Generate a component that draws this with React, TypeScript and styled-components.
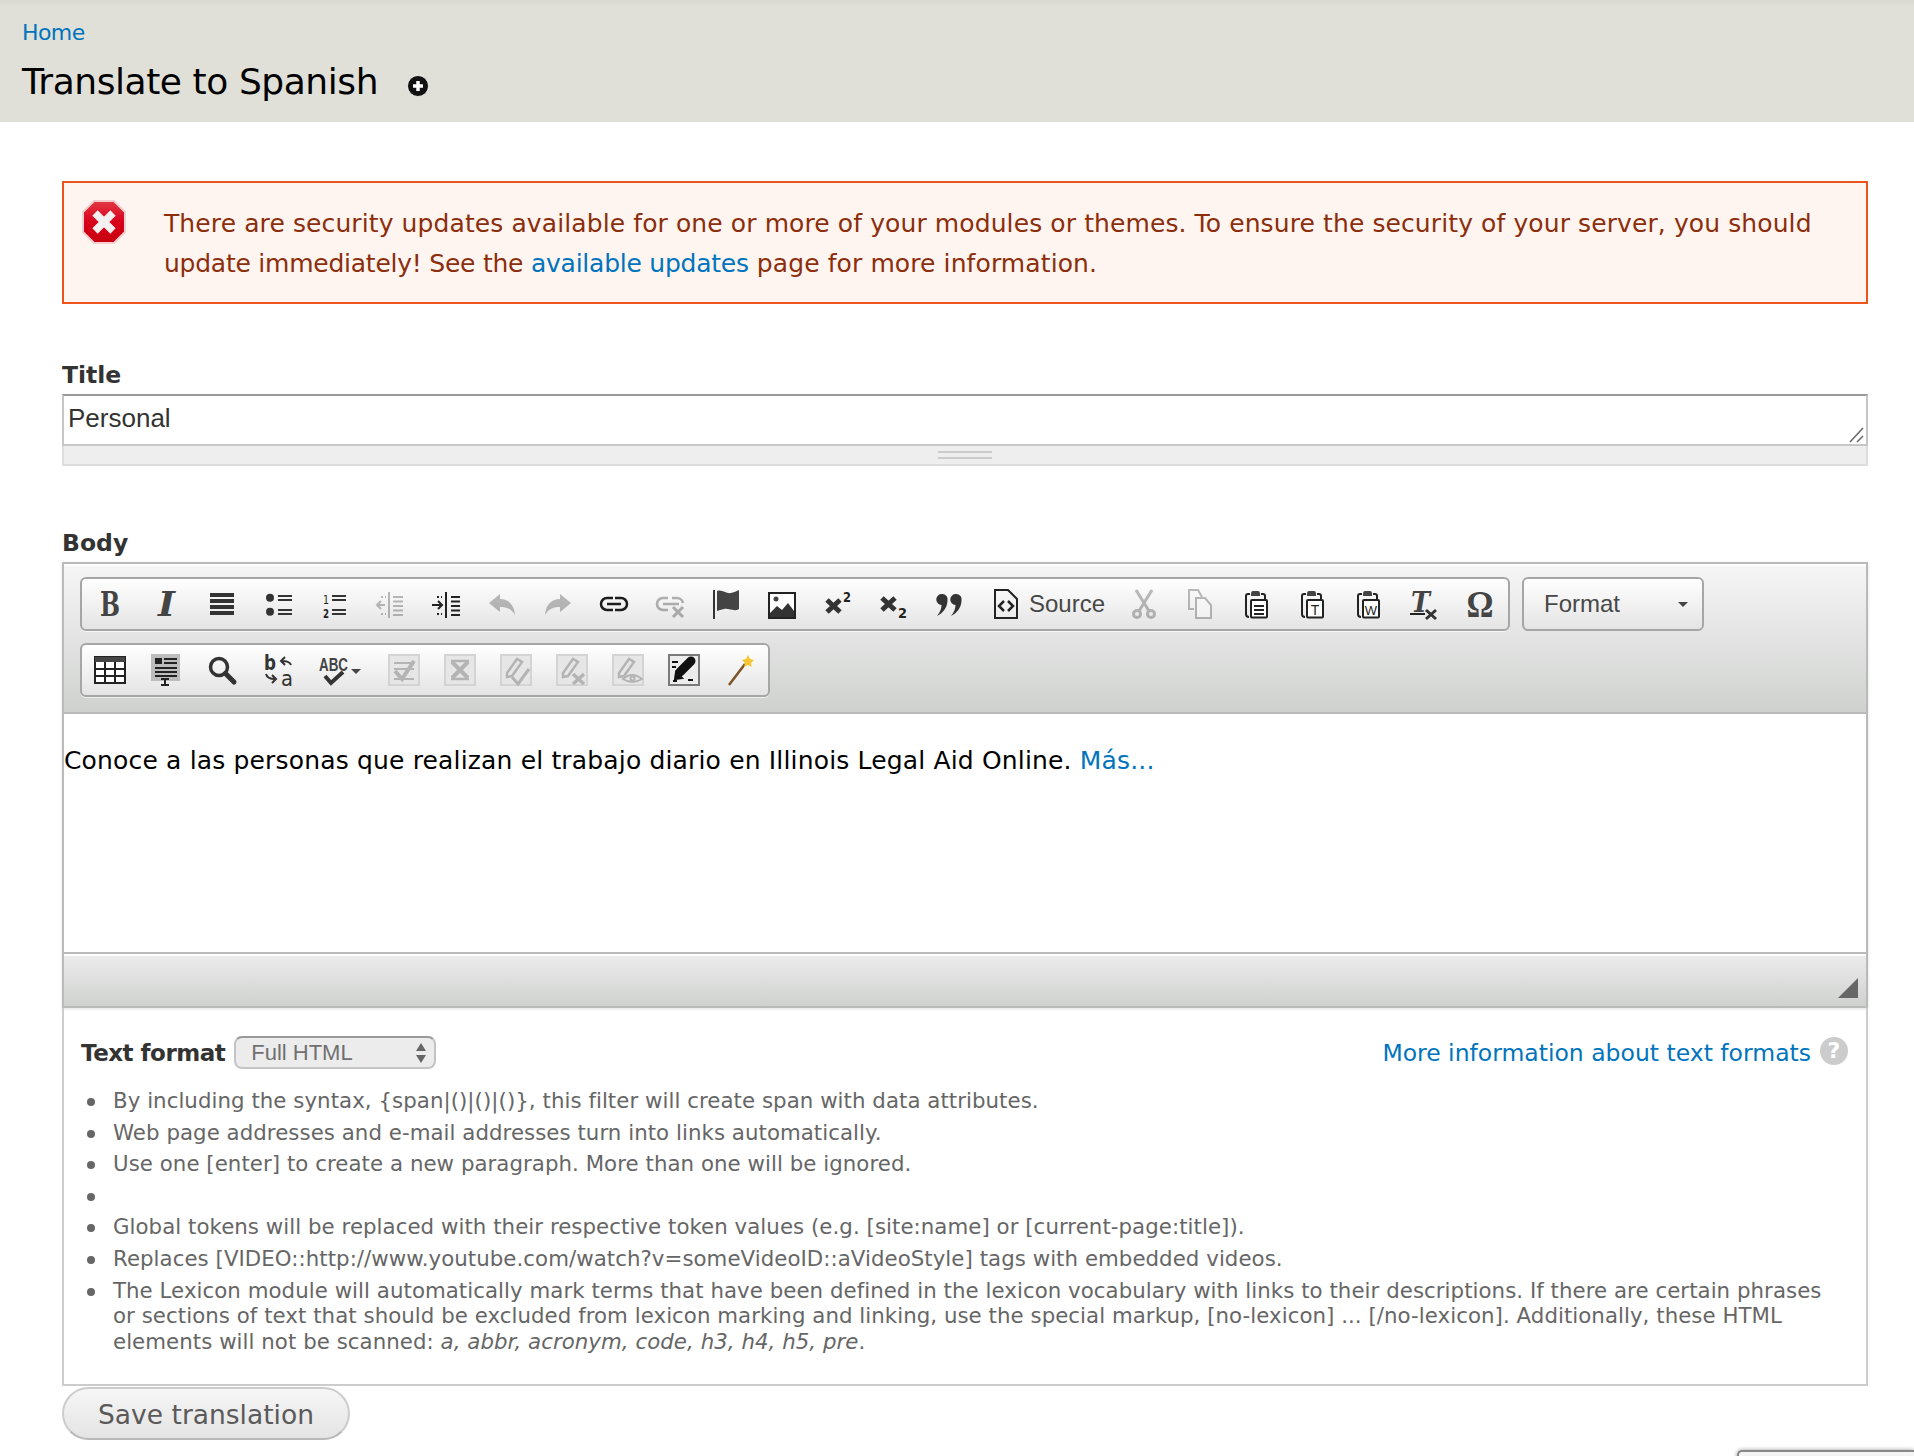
import React from "react";
import styled, { createGlobalStyle } from "styled-components";

const GlobalStyle = createGlobalStyle`
  html, body {
    margin: 0;
    padding: 0;
    background: #fff;
  }
  body {
    width: 1914px;
    height: 1456px;
    overflow: hidden;
    font-family: "DejaVu Sans", sans-serif;
    position: relative;
  }
`;

const Header = styled.header`
  background: linear-gradient(#d8d8d0 0, #e0e0d8 6px);
  height: 122px;
  box-sizing: border-box;
  padding: 17px 22px 0;
`;

const Link = styled.a`
  color: #0074bd;
  text-decoration: none;
`;

const Crumb = styled.div`
  font-size: 22px;
  line-height: 32px;
  letter-spacing: -0.6px;
`;

const TitleRow = styled.div`
  display: flex;
  align-items: center;
  margin-top: 8px;
  height: 50px;
`;

const PageTitle = styled.h1`
  margin: 0;
  font-size: 36px;
  font-weight: 400;
  line-height: 50px;
  color: #000;
  letter-spacing: -0.43px;
`;

const Shortcut = styled.svg`
  width: 22px;
  height: 22px;
  margin: 7px 0 0 29px;
`;

const Main = styled.main`
  padding: 59px 46px 0 62px;
`;

const Alert = styled.div`
  box-sizing: border-box;
  height: 123px;
  border: 2px solid #ed541d;
  background: #fef5f1;
  color: #8c2e0b;
  font-size: 25px;
  line-height: 40px;
  padding: 21px 40px 0 100px;
  position: relative;
  letter-spacing: 0.1px;
`;

const AlertLead = styled.span`
  letter-spacing: -0.24px;
`;

const AlertIcon = styled.svg`
  position: absolute;
  left: 17px;
  top: 16px;
  width: 46px;
  height: 46px;
`;

const FieldLabel = styled.label`
  display: block;
  font-size: 23.5px;
  font-weight: 700;
  line-height: 30px;
  color: #333;
  margin-bottom: 4px;
`;

const TitleField = styled.div`
  margin-top: 56px;
`;

const BodyField = styled.div`
  margin-top: 62px;
`;

const TitleBox = styled.div`
  box-sizing: border-box;
  height: 52px;
  border: 2px solid #c6c6c6;
  border-top-color: #999;
  font-family: "Liberation Sans", Arial, sans-serif;
  font-size: 26px;
  line-height: 44px;
  color: #333;
  padding: 0 2px 4px 4px;
  display: flex;
  justify-content: space-between;
  align-items: flex-end;
`;

const ResizeGrip = styled.svg`
  width: 15px;
  height: 16px;
  margin-bottom: -3px;
`;

const Grippie = styled.div`
  box-sizing: border-box;
  height: 20px;
  background: #eee;
  border: 2px solid #ddd;
  border-top: 0;
  display: flex;
  justify-content: center;
  padding-top: 5px;
`;

const GripLines = styled.div`
  width: 54px;
  height: 8px;
  border-top: 2px solid #ccc;
  border-bottom: 2px solid #ccc;
  box-sizing: border-box;
`;

const Editor = styled.div`
  border: 2px solid #bababa;
  box-shadow: 0 1px 3px rgba(0, 0, 0, 0.12);
`;

const Toolbars = styled.div`
  box-sizing: border-box;
  height: 150px;
  background: linear-gradient(#f6f6f6, #cfd1cf);
  border-bottom: 2px solid #bababa;
  padding: 13px 16px 0 16px;
  display: flex;
  flex-direction: column;
  gap: 12px;
  box-shadow: inset 0 2px 0 #fff;
`;

const ToolRow = styled.div`
  display: flex;
  gap: 12px;
`;

const ToolGroup = styled.div`
  display: flex;
  box-sizing: border-box;
  height: 54px;
  border: 2px solid #a6a6a6;
  border-radius: 6px;
  background: linear-gradient(#fff, #e4e4e4);
  box-shadow: 0 1px 0 rgba(255, 255, 255, 0.6);
  padding: 0;
`;

const ToolButton = styled.div<{ $width?: number; $off?: boolean }>`
  width: ${(p) => p.$width ?? 56}px;
  flex: none;
  height: 50px;
  display: flex;
  align-items: center;
  justify-content: center;
  gap: 8px;
  & > svg {
    overflow: visible;
    opacity: ${(p) => (p.$off ? 0.32 : 1)};
  }
`;

const SourceLabel = styled.span`
  font-family: "Liberation Sans", Arial, sans-serif;
  font-size: 24px;
  color: #474747;
`;

const FormatCombo = styled.div`
  box-sizing: border-box;
  width: 182px;
  height: 54px;
  border: 2px solid #a6a6a6;
  border-radius: 6px;
  background: linear-gradient(#fff, #e4e4e4);
  font-family: "Liberation Sans", Arial, sans-serif;
  font-size: 24px;
  color: #484848;
  padding: 0 14px 0 20px;
  display: flex;
  align-items: center;
  justify-content: space-between;
`;

const ComboArrow = styled.span`
  width: 0;
  height: 0;
  border-left: 5px solid transparent;
  border-right: 5px solid transparent;
  border-top: 5px solid #444;
`;

const Content = styled.div`
  height: 238px;
  box-sizing: border-box;
  background: #fff;
  padding: 27px 0 0;
  font-size: 25px;
  line-height: 40px;
  color: #000;
  letter-spacing: 0.16px;
`;

const BottomBar = styled.div`
  box-sizing: border-box;
  height: 54px;
  border-top: 2px solid #bababa;
  background: linear-gradient(#ececec, #cfd1cf);
  box-shadow: inset 0 2px 0 #fff;
  display: flex;
  justify-content: flex-end;
  align-items: flex-end;
  padding: 0 8px 8px 0;
`;

const ResizeCorner = styled.span`
  width: 0;
  height: 0;
  border-left: 20px solid transparent;
  border-bottom: 20px solid #666;
`;

const FormatPanel = styled.div`
  box-sizing: border-box;
  height: 378px;
  border: 2px solid #ccc;
  border-top: 0;
  padding: 28px 17px 0;
`;

const FormatRow = styled.div`
  display: flex;
  align-items: center;
  height: 33px;
`;

const FormatLabel = styled.span`
  font-size: 23px;
  font-weight: 700;
  color: #333;
  margin-right: 9px;
  letter-spacing: -0.5px;
`;

const FilterSelect = styled.div`
  box-sizing: border-box;
  width: 202px;
  height: 33px;
  border: 2px solid #c4c4c4;
  border-top-color: #999;
  border-radius: 8px;
  background: #ececec;
  font-family: "Liberation Sans", Arial, sans-serif;
  font-size: 22px;
  color: #707070;
  padding-left: 15px;
  display: flex;
  align-items: center;
  justify-content: space-between;
`;

const Stepper = styled.svg`
  width: 12px;
  height: 22px;
  margin-right: 7px;
`;

const HelpLink = styled(Link)`
  margin-left: auto;
  font-size: 23.5px;
`;

const HelpIcon = styled.span`
  width: 28px;
  height: 28px;
  border-radius: 50%;
  background: #ccc;
  color: #fff;
  font-weight: 700;
  font-size: 22px;
  line-height: 28px;
  text-align: center;
  margin: -3px 1px 0 9px;
  flex: none;
`;

const Tips = styled.ul`
  list-style: none;
  margin: 19px 0 0;
  padding: 0 20px 0 32px;
  font-size: 21.3px;
  line-height: 25.6px;
  letter-spacing: 0.05px;
  color: #666;
`;

const Tip = styled.li`
  position: relative;
  margin-bottom: 6px;
  min-height: 25.6px;
  em {
    font-style: italic;
  }
  &::before {
    content: "";
    position: absolute;
    left: -26px;
    top: 10px;
    width: 8px;
    height: 8px;
    border-radius: 50%;
    background: #666;
  }
`;

const SaveButton = styled.button`
  display: block;
  width: 288px;
  height: 53px;
  margin-top: 1px;
  border: 2px solid #ccc;
  border-bottom-color: #b8b8b8;
  border-radius: 27px;
  background: linear-gradient(#f6f6f6, #e4e4e4);
  font-family: "DejaVu Sans", sans-serif;
  font-size: 26.5px;
  color: #5a5a5a;
  padding: 1px 0 0;
`;

const CornerTab = styled.div`
  position: fixed;
  right: 0;
  bottom: -20px;
  width: 175px;
  height: 24px;
  background: #f4f4f4;
  border-top: 2px solid #888;
  border-left: 2px solid #888;
  border-radius: 5px 0 0 0;
  box-shadow: 0 0 4px rgba(0, 0, 0, 0.4);
`;

const Glyph = styled.text<{ $size: number; $family?: string; $weight?: number; $italic?: boolean; $fill?: string }>`
  font-family: ${(p) => p.$family ?? '"DejaVu Serif", serif'};
  font-size: ${(p) => p.$size}px;
  font-weight: ${(p) => p.$weight ?? 700};
  font-style: ${(p) => (p.$italic ? "italic" : "normal")};
  fill: ${(p) => p.$fill ?? "#444"};
`;

const SANS = '"DejaVu Sans", sans-serif';
const ARIAL = '"Liberation Sans", Arial, sans-serif';

const Clipboard = ({ children }: { children: React.ReactNode }) => (
  <>
    <path d="M10 6H8Q6 6 6 8V26Q6 29 9 29" fill="none" stroke="#222" strokeWidth="2" />
    <path d="M11 6Q11 3 13 3H18Q20 3 20 6V8H11Z" fill="#444" />
    <path d="M21 6H23Q25 6 25 8V11" fill="none" stroke="#222" strokeWidth="2" />
    <rect x="11" y="12" width="16" height="17.500" rx="1" fill="#fff" stroke="#222" strokeWidth="2" />
    {children}
  </>
);

const Pencil = ({ ink }: { ink: string }) => (
  <path d="M7 19L17 5L22 8L12 22L7 23Z" fill="none" stroke={ink} strokeWidth="2.500" />
);

const Proof = ({ ink = "#b4b4b4", back = "#e6e6e6", edge = "#d4d4d4", children }: { ink?: string; back?: string; edge?: string; children: React.ReactNode }) => (
  <>
    <rect x="1" y="1" width="30" height="30" fill={back} stroke={edge} strokeWidth="2" />
    <g stroke={ink} fill="none">{children}</g>
  </>
);

const icons: Record<string, React.ReactNode> = {
  bold: <Glyph x="6" y="28" textLength={20} lengthAdjust="spacingAndGlyphs" $size={33}>B</Glyph>,
  italic: <Glyph x="8" y="28" textLength={17} lengthAdjust="spacingAndGlyphs" $size={33} $italic>I</Glyph>,
  justify: (
    <g fill="#333">
      <rect x="4" y="5" width="24" height="4" />
      <rect x="4" y="11" width="24" height="4" />
      <rect x="4" y="17" width="24" height="4" />
      <rect x="4" y="23" width="24" height="4" />
    </g>
  ),
  bullets: (
    <g fill="#333">
      <circle cx="8" cy="9.700" r="4" />
      <circle cx="8" cy="23.700" r="4" />
      <rect x="16" y="7" width="14" height="2" />
      <rect x="16" y="11" width="14" height="2" />
      <rect x="16" y="21" width="14" height="2" />
      <rect x="16" y="25" width="14" height="2" />
    </g>
  ),
  numbers: (
    <>
      <Glyph x="5" y="16" textLength={6} lengthAdjust="spacingAndGlyphs" $size={13} $family={SANS} $weight={400} $fill="#222">1</Glyph>
      <Glyph x="5" y="30" textLength={6} lengthAdjust="spacingAndGlyphs" $size={13} $family={SANS} $fill="#222">2</Glyph>
      <g fill="#333">
        <rect x="14" y="7" width="14" height="2" />
        <rect x="14" y="11" width="14" height="2" />
        <rect x="14" y="21" width="14" height="2" />
        <rect x="14" y="25" width="14" height="2" />
      </g>
    </>
  ),
  outdent: (
    <g stroke="#333" strokeWidth="2" fill="none">
      <path d="M15 4V30" />
      <path d="M19 9H29M19 13.500H29M19 18H29M19 22.500H29M19 27H29" />
      <path d="M11 17H3M7 13L3 17L7 21" />
      <path d="M7 9H12M7 26H12" strokeDasharray="2 2" />
    </g>
  ),
  indent: (
    <g stroke="#222" strokeWidth="2" fill="none">
      <path d="M16 4V30" />
      <path d="M21 9H30M21 13.500H30M21 18H30M21 22.500H30M21 27H30" />
      <path d="M2 17H12M8 13L12 17L8 21" />
      <path d="M7 9H12M7 26H12" strokeDasharray="2 2" />
    </g>
  ),
  undo: <path d="M3 15L14 6V11C22 11 28 16 29 27C25 20 20 19 14 19V24Z" fill="#333" />,
  redo: <path d="M29 15L18 6V11C10 11 4 16 3 27C7 20 12 19 18 19V24Z" fill="#333" />,
  link: (
    <g fill="none" stroke="#1c1c1c" strokeWidth="2.500">
      <path d="M15 10H9A6 6 0 0 0 9 22H15M9 16H23M17 10H23A6 6 0 0 1 23 22H17" />
    </g>
  ),
  unlink: (
    <g fill="none" stroke="#1c1c1c" strokeWidth="2.500">
      <path d="M14 10H9A6 6 0 0 0 9 22H14M9 16H25M18 10H23A6 6 0 0 1 29 15" />
      <path d="M19 19L29 29M29 19L19 29" strokeWidth="3" />
    </g>
  ),
  flag: (
    <>
      <path d="M4 2V31" stroke="#333" strokeWidth="2" />
      <path d="M7 3C12 1 16 6 21 5C25 4 27 3 29 2V21C24 24 19 20 14 21C11 21.500 9 22.500 7 23Z" fill="#444" />
    </>
  ),
  image: (
    <>
      <rect x="3" y="5" width="26" height="25" fill="#fff" stroke="#222" strokeWidth="2" />
      <circle cx="10" cy="11" r="2.500" fill="#444" />
      <path d="M4 29V25L11 18L16 22L22 15L28 23V29Z" fill="#333" />
    </>
  ),
  superscript: (
    <>
      <path d="M5 12L18 24M18 12L5 24" stroke="#333" strokeWidth="5" />
      <Glyph x="21" y="14" textLength={8} lengthAdjust="spacingAndGlyphs" $size={14} $family={SANS} $fill="#222">2</Glyph>
    </>
  ),
  subscript: (
    <>
      <path d="M4 10L17 22M17 10L4 22" stroke="#333" strokeWidth="5" />
      <Glyph x="20" y="30" textLength={9} lengthAdjust="spacingAndGlyphs" $size={14} $family={SANS} $fill="#222">2</Glyph>
    </>
  ),
  quote: (
    <g fill="#333">
      <path d="M8 6A5.500 5.500 0 0 1 13.500 13C13 20 9 25 3 28C6 24 7.500 21 7.500 17A5.500 5.500 0 0 1 8 6Z" />
      <path d="M22 6A5.500 5.500 0 0 1 27.500 13C27 20 23 25 17 28C20 24 21.500 21 21.500 17A5.500 5.500 0 0 1 22 6Z" />
    </g>
  ),
  source: (
    <g fill="none" stroke="#222" strokeWidth="2">
      <path d="M6 2H19L28 11V30H6Z" />
      <path d="M15 13L10 18L15 23M19 13L24 18L19 23" strokeWidth="2.500" />
    </g>
  ),
  cut: (
    <g fill="none" stroke="#333" strokeWidth="3">
      <path d="M11 23L24 2M21 23L8 2" />
      <circle cx="9" cy="26" r="3.500" />
      <circle cx="23" cy="26" r="3.500" />
    </g>
  ),
  copy: (
    <g fill="none" stroke="#333" strokeWidth="2">
      <path d="M10 21H5V2H14L18 9" />
      <path d="M12 10H21L27 17V30H12Z" fill="#fff" />
    </g>
  ),
  paste: (
    <Clipboard>
      <path d="M14 18H24M14 22H24M14 26H24" stroke="#222" strokeWidth="2" />
    </Clipboard>
  ),
  pasteText: (
    <Clipboard>
      <Glyph x="19" y="27" textAnchor="middle" $size={14} $family={ARIAL} $weight={400} $fill="#222">T</Glyph>
    </Clipboard>
  ),
  pasteWord: (
    <Clipboard>
      <Glyph x="19" y="27" textAnchor="middle" $size={13} $family={ARIAL} $weight={400} $fill="#222">W</Glyph>
    </Clipboard>
  ),
  clearFormat: (
    <>
      <Glyph x="3" y="24" textLength={19} lengthAdjust="spacingAndGlyphs" $size={27} $italic>T</Glyph>
      <rect x="2" y="25" width="15" height="2" fill="#222" />
      <path d="M18 22L28 31M28 22L18 31" stroke="#333" strokeWidth="3" />
    </>
  ),
  omega: <Glyph x="2.500" y="29" textLength={27} lengthAdjust="spacingAndGlyphs" $size={38} $family={'"Liberation Serif", serif'}>Ω</Glyph>,
  table: (
    <>
      <rect x="1" y="3" width="30" height="26" fill="#fff" stroke="#222" strokeWidth="2" />
      <rect x="1" y="3" width="30" height="5" fill="#444" />
      <path d="M11 8V29M21 8V29M1 15H31M1 22H31" stroke="#222" strokeWidth="2" />
    </>
  ),
  templates: (
    <>
      <rect x="1" y="0" width="29" height="27" fill="#bdbdbd" />
      <rect x="5" y="4" width="7" height="6" fill="#222" />
      <path d="M14 5H27M14 9H27M5 14H27M5 18H27M5 22H27" stroke="#222" strokeWidth="2" />
      <path d="M11 25H15M11 31H19M15 25V31M15 25H19" stroke="#222" strokeWidth="2" />
    </>
  ),
  find: (
    <g fill="none" stroke="#333">
      <circle cx="13" cy="13" r="8.500" strokeWidth="3.500" />
      <path d="M19.500 19.500L28 28" strokeWidth="5" strokeLinecap="round" />
    </g>
  ),
  replace: (
    <>
      <Glyph x="2" y="16" textLength={12} lengthAdjust="spacingAndGlyphs" $size={22} $family={SANS} $fill="#333">b</Glyph>
      <Glyph x="19" y="32" textLength={12} lengthAdjust="spacingAndGlyphs" $size={22} $family={SANS} $weight={400} $fill="#333">a</Glyph>
      <path d="M29 11C28 8 25 7 20 7M23 3L19 7L23 11M4 20C5 24 8 25 13 25M10 21L14 25L10 29" fill="none" stroke="#333" strokeWidth="2" />
    </>
  ),
  scayt: (
    <>
      <Glyph x="1" y="17" textLength={29} lengthAdjust="spacingAndGlyphs" $size={18} $family={ARIAL} $fill="#444">ABC</Glyph>
      <path d="M7 22L13 29L25 18" fill="none" stroke="#333" strokeWidth="4" />
      <path d="M33 15H43L38 20Z" fill="#444" />
    </>
  ),
  proofCheck: (
    <Proof>
      <path d="M6 9H26M6 15H26M6 25H26" strokeWidth="2" />
      <path d="M7 17L14 25L26 7" strokeWidth="4" />
    </Proof>
  ),
  proofCross: (
    <Proof>
      <path d="M7 7H25M7 25H25" strokeWidth="2.500" />
      <path d="M8 8L24 24M24 8L8 24" strokeWidth="4" />
    </Proof>
  ),
  proofPen: (
    <Proof>
      <Pencil ink="#b4b4b4" />
      <path d="M12 23L18 30L29 15" strokeWidth="3" />
    </Proof>
  ),
  proofPenCross: (
    <Proof>
      <Pencil ink="#b4b4b4" />
      <path d="M17 20L28 30M28 20L17 30" strokeWidth="3.500" />
    </Proof>
  ),
  proofPenEye: (
    <Proof>
      <Pencil ink="#b4b4b4" />
      <path d="M11 25Q20 17 30 25Q20 31 11 25Z" strokeWidth="2" />
      <circle cx="20.500" cy="24.500" r="2" strokeWidth="2" />
    </Proof>
  ),
  proofDialog: (
    <Proof ink="#111" back="#ececec" edge="#7a7a7a">
      <path d="M12 18L23 7" strokeWidth="9" strokeLinecap="round" />
      <path d="M8 18L14 24L7 25Z" fill="#111" strokeWidth="2" />
      <path d="M4 8H10M4 13H8M5 27H9M20 26H25" strokeWidth="2" />
    </Proof>
  ),
  wand: (
    <>
      <path d="M5 31L21 10" stroke="#7d5227" strokeWidth="2.500" />
      <path d="M24 1L26 5L30 6L27 9L27.500 13L24 11L20 13L21 9L18 6L22 5Z" fill="#f6c632" />
    </>
  ),
};

type Tool = { icon: string; off?: boolean; width?: number; label?: string; viewWidth?: number };

const firstRow: Tool[] = [
  { icon: "bold" },
  { icon: "italic" },
  { icon: "justify" },
  { icon: "bullets" },
  { icon: "numbers" },
  { icon: "outdent", off: true },
  { icon: "indent" },
  { icon: "undo", off: true },
  { icon: "redo", off: true },
  { icon: "link" },
  { icon: "unlink", off: true },
  { icon: "flag" },
  { icon: "image" },
  { icon: "superscript" },
  { icon: "subscript" },
  { icon: "quote" },
  { icon: "source", width: 138, label: "Source" },
  { icon: "cut", off: true },
  { icon: "copy", off: true },
  { icon: "paste" },
  { icon: "pasteText" },
  { icon: "pasteWord" },
  { icon: "clearFormat" },
  { icon: "omega" },
];

const secondRow: Tool[] = [
  { icon: "table" },
  { icon: "templates" },
  { icon: "find" },
  { icon: "replace" },
  { icon: "scayt", width: 70, viewWidth: 46 },
  { icon: "proofCheck" },
  { icon: "proofCross" },
  { icon: "proofPen" },
  { icon: "proofPenCross" },
  { icon: "proofPenEye" },
  { icon: "proofDialog" },
  { icon: "wand" },
];

const renderTools = (tools: Tool[]) =>
  tools.map((tool) => (
    <ToolButton key={tool.icon} $width={tool.width} $off={tool.off}>
      <svg
        width={tool.viewWidth ?? 32}
        height="32"
        viewBox={`0 0 ${tool.viewWidth ?? 32} 32`}
      >
        {icons[tool.icon]}
      </svg>
      {tool.label && <SourceLabel>{tool.label}</SourceLabel>}
    </ToolButton>
  ));

const App: React.FC = () => {
  return (
    <>
      <GlobalStyle />
      <Header>
        <Crumb>
          <Link href="#">Home</Link>
        </Crumb>
        <TitleRow>
          <PageTitle>Translate to Spanish</PageTitle>
          <Shortcut viewBox="0 0 22 22">
            <circle cx="11" cy="11" r="10.500" fill="#111" stroke="#fff" strokeWidth="0.800" />
            <path d="M11 6V16M6 11H16" stroke="#fff" strokeWidth="3.500" />
          </Shortcut>
        </TitleRow>
      </Header>
      <Main>
        <Alert>
          <AlertIcon viewBox="0 0 46 46">
            <defs>
              <linearGradient id="stopFill" x1="0" y1="0" x2="0" y2="1">
                <stop offset="0" stopColor="#e23a45" />
                <stop offset="0.500" stopColor="#d8001a" />
                <stop offset="1" stopColor="#c8000f" />
              </linearGradient>
            </defs>
            <path d="M13 2H33L44 13V33L33 44H13L2 33V13Z" fill="url(#stopFill)" stroke="#f3cfcf" strokeWidth="2" />
            <path d="M14 14L32 32M32 14L14 32" stroke="#f4f0f0" strokeWidth="7.500" />
          </AlertIcon>
          There are security updates available for one or more of your modules or themes. To ensure the security of your server, you should <AlertLead>update immediately! See the <Link href="#">available updates</Link></AlertLead> page for more information.
        </Alert>
        <TitleField>
          <FieldLabel>Title</FieldLabel>
          <TitleBox>
            Personal
            <ResizeGrip viewBox="0 0 15 16">
              <path d="M1 15L14 1M8 15L14 9" stroke="#666" strokeWidth="1.500" />
            </ResizeGrip>
          </TitleBox>
          <Grippie>
            <GripLines />
          </Grippie>
        </TitleField>
        <BodyField>
          <FieldLabel>Body</FieldLabel>
          <Editor>
            <Toolbars>
              <ToolRow>
                <ToolGroup>{renderTools(firstRow)}</ToolGroup>
                <FormatCombo>
                  Format
                  <ComboArrow />
                </FormatCombo>
              </ToolRow>
              <ToolRow>
                <ToolGroup>{renderTools(secondRow)}</ToolGroup>
              </ToolRow>
            </Toolbars>
            <Content>
              Conoce a las personas que realizan el trabajo diario en Illinois Legal Aid Online. <Link href="#">Más...</Link>
            </Content>
            <BottomBar>
              <ResizeCorner />
            </BottomBar>
          </Editor>
          <FormatPanel>
            <FormatRow>
              <FormatLabel>Text format</FormatLabel>
              <FilterSelect>
                Full HTML
                <Stepper viewBox="0 0 12 22">
                  <path d="M6 1L11 9H1ZM6 21L1 13H11Z" fill="#666" />
                </Stepper>
              </FilterSelect>
              <HelpLink href="#">More information about text formats</HelpLink>
              <HelpIcon>?</HelpIcon>
            </FormatRow>
            <Tips>
              <Tip>By including the syntax, {"{span|()|()|()}"}, this filter will create span with data attributes.</Tip>
              <Tip>Web page addresses and e-mail addresses turn into links automatically.</Tip>
              <Tip>Use one [enter] to create a new paragraph. More than one will be ignored.</Tip>
              <Tip />
              <Tip>Global tokens will be replaced with their respective token values (e.g. [site:name] or [current-page:title]).</Tip>
              <Tip>Replaces [VIDEO::http://www.youtube.com/watch?v=someVideoID::aVideoStyle] tags with embedded videos.</Tip>
              <Tip>The Lexicon module will automatically mark terms that have been defined in the lexicon vocabulary with links to their descriptions. If there are certain phrases or sections of text that should be excluded from lexicon marking and linking, use the special markup, [no-lexicon] ... [/no-lexicon]. Additionally, these HTML elements will not be scanned: <em>a, abbr, acronym, code, h3, h4, h5, pre</em>.</Tip>
            </Tips>
          </FormatPanel>
          <SaveButton>Save translation</SaveButton>
        </BodyField>
      </Main>
      <CornerTab />
    </>
  );
};

export default App;
